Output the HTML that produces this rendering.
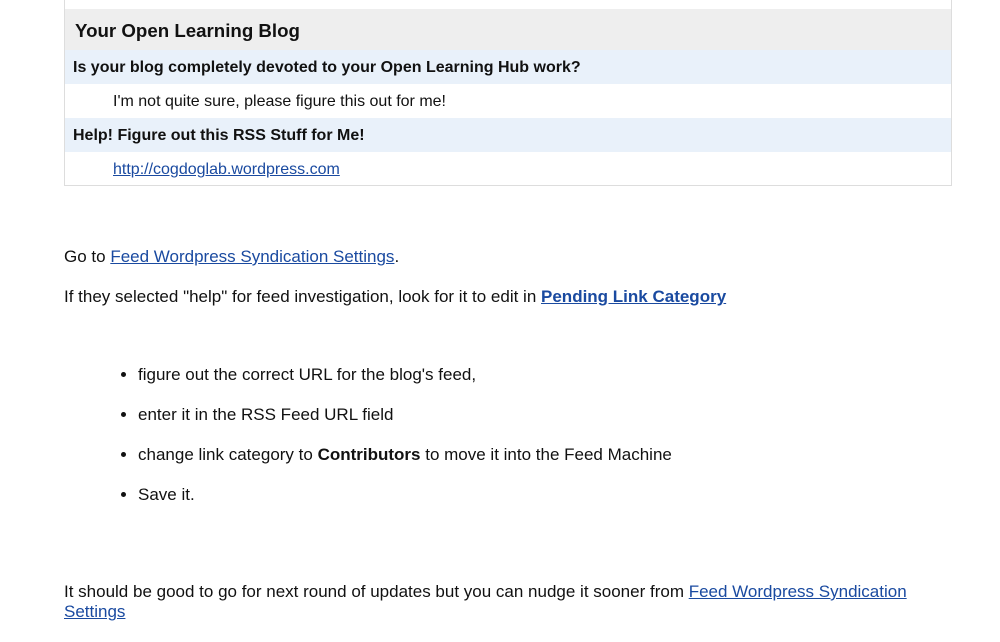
<!DOCTYPE html>
<html><head><meta charset="utf-8"><style>
body{margin:0;width:1000px;height:642px;overflow:hidden;background:#fff;font-family:"Liberation Sans",Arial,sans-serif;color:#111;font-size:17px;position:relative}
.box{position:absolute;left:64px;top:-1px;width:888px;height:187px;border:1px solid #ddd;border-top:none;box-sizing:border-box;overflow:hidden}
.r{position:absolute;left:0;right:0;box-sizing:border-box}
.h{top:10px;height:41px;background:#eee;font-weight:bold;font-size:18.7px;padding:11px 0 0 10px}
.q{background:#e9f1fa;font-weight:bold;font-size:16px;padding:9px 0 0 8px;height:34px}
.a{background:#fff;font-size:16px;padding:9px 0 0 48px;height:33px}
a{color:#1a4aa0;text-decoration:underline}
p{position:absolute;left:64px;margin:0}
ul{position:absolute;left:98px;margin:0;padding-left:40px}
li{position:absolute;white-space:nowrap}
</style></head><body>
<div class="box">
<div class="r h">Your Open Learning Blog</div>
<div class="r q" style="top:51px">Is your blog completely devoted to your Open Learning Hub work?</div>
<div class="r a" style="top:85px">I'm not quite sure, please figure this out for me!</div>
<div class="r q" style="top:119px">Help! Figure out this RSS Stuff for Me!</div>
<div class="r a" style="top:153px;height:32px"><a>http://cogdoglab.wordpress.com</a></div>
</div>
<p style="top:247px">Go to <a>Feed Wordpress Syndication Settings</a>.</p>
<p style="top:287px">If they selected "help" for feed investigation, look for it to edit in <a style="font-weight:bold">Pending Link Category</a></p>
<ul style="top:0">
<li style="top:365px">figure out the correct URL for the blog's feed,</li>
<li style="top:405px">enter it in the RSS Feed URL field</li>
<li style="top:445px">change link category to <b>Contributors</b> to move it into the Feed Machine</li>
<li style="top:485px">Save it.</li>
</ul>
<p style="top:582px;width:880px;line-height:20px">It should be good to go for next round of updates but you can nudge it sooner from <a>Feed Wordpress Syndication Settings</a></p>
</body></html>
